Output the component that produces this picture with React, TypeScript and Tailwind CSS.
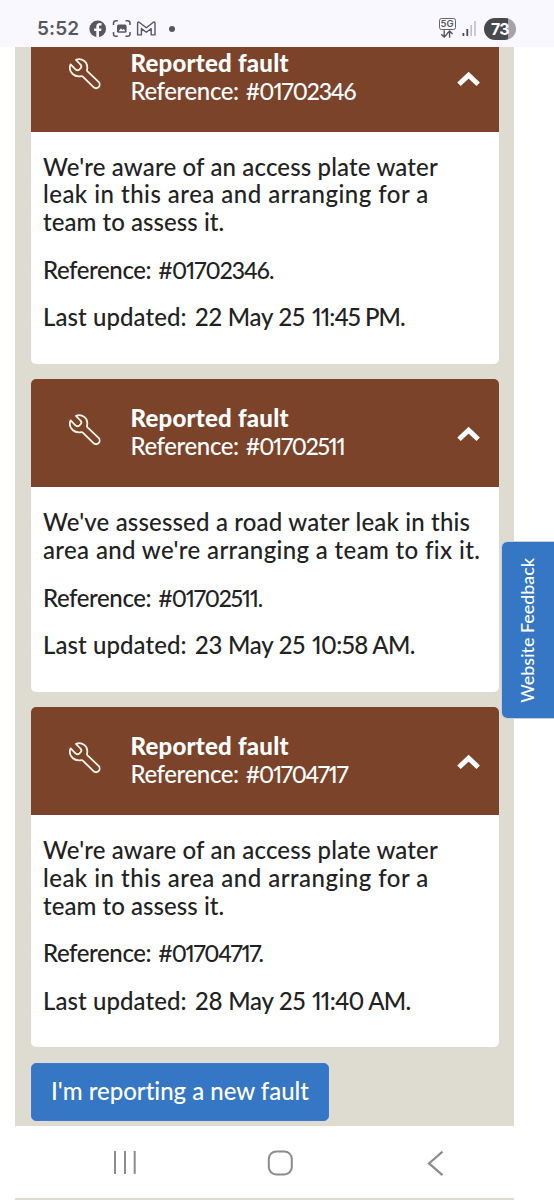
type Line = { text: string; spacing: string };
type Fault = {
  id: string;
  idSpacing: string;
  idDotSpacing: string;
  lines: Line[];
  date: string;
  time: string;
  timeSpacing: string;
};

const awareLines: Line[] = [
  { text: "We're aware of an access plate water", spacing: "tracking-[0.15px]" },
  { text: "leak in this area and arranging for a", spacing: "tracking-[0.48px]" },
  { text: "team to assess it.", spacing: "tracking-[0.06px]" },
];

const faults: Fault[] = [
  {
    id: "#01702346",
    idSpacing: "tracking-[-1.1px]",
    idDotSpacing: "tracking-[-1px]",
    lines: awareLines,
    date: "22 May 25",
    time: "11:45 PM.",
    timeSpacing: "tracking-[-0.95px]",
  },
  {
    id: "#01702511",
    idSpacing: "tracking-[-1.3px]",
    idDotSpacing: "tracking-[-1.2px]",
    lines: [
      { text: "We've assessed a road water leak in this", spacing: "tracking-[0.17px]" },
      { text: "area and we're arranging a team to fix it.", spacing: "tracking-[0.36px]" },
    ],
    date: "23 May 25",
    time: "10:58 AM.",
    timeSpacing: "tracking-[-0.6px]",
  },
  {
    id: "#01704717",
    idSpacing: "tracking-[-1.35px]",
    idDotSpacing: "tracking-[-1.3px]",
    lines: awareLines,
    date: "28 May 25",
    time: "11:40 AM.",
    timeSpacing: "tracking-[-0.75px]",
  },
];

function Wrench() {
  return (
    <svg width="32" height="32" viewBox="0 0 32 32" fill="none" stroke="#fff6e8" strokeWidth="1.8" strokeLinejoin="round" strokeLinecap="round">
      <path d="M7 1.9 C10.8 .3 15.2 1.5 17.2 5 C18.4 7.2 18.6 9.4 18 12 Q17.9 12.8 18.5 13.4 L29.6 23.9 C31 25.4 31 27.8 29.6 29.2 C28.2 30.6 25.9 30.6 24.5 29.2 L13.8 18.6 Q13.2 18 12.4 18.1 C9.3 18.7 6.2 18.3 3.7 16 C1 13.4 .1 9.6 1.6 6.4 L6.5 11.3 C7.6 12.4 9.4 12.4 10.5 11.4 L11.5 10.4 C12.5 9.3 12.5 7.6 11.4 6.5 Z" />
    </svg>
  );
}

function Chevron() {
  return (
    <svg width="24" height="18" viewBox="0 0 24 18" fill="none" stroke="#fff" strokeWidth="5">
      <path d="M2 15.2 L11.6 6.2 L21.2 15.2" />
    </svg>
  );
}

function FaultCard({ fault }: { fault: Fault }) {
  return (
    <section className="overflow-hidden rounded-[5px] bg-white">
      <header className="flex h-[108px] items-center bg-[#7b432a] pr-[18px] pl-[38px] text-white">
        <div className="w-[61.5px] pb-[7px]">
          <Wrench />
        </div>
        <div className="flex-1 pb-[2px]">
          <h2 className="text-[24px] leading-[28px] font-black tracking-[0.22px]">Reported fault</h2>
          <div className="flex items-baseline text-[24px] leading-[28px] font-medium">
            <span className="w-[115px] tracking-[-0.4px]">Reference:</span>
            <span className={`text-[23px] ${fault.idSpacing}`}>{fault.id}</span>
          </div>
        </div>
        <Chevron />
      </header>
      <div className="flex flex-col gap-[19.8px] px-3 pt-[21px] pb-[32.6px] text-[24px] leading-[27.8px] font-medium text-[#222]">
        <p>
          {fault.lines.map((line) => (
            <span key={line.text} className={`block ${line.spacing}`}>{line.text}</span>
          ))}
        </p>
        <p className="flex h-[27.8px] items-baseline">
          <span className="w-[115px] tracking-[-0.4px]">Reference:</span>
          <span className={`text-[23px] ${fault.idDotSpacing}`}>{fault.id}.</span>
        </p>
        <p className="flex">
          <span className="w-[152px] tracking-[0.08px]">Last updated:</span>
          <span className="w-[117px] tracking-[-0.2px]">{fault.date}</span>
          <span className={fault.timeSpacing}>{fault.time}</span>
        </p>
      </div>
    </section>
  );
}

function StatusBar() {
  return (
    <div className="relative z-10 flex h-[46.5px] items-start bg-[#f9f7ff] pr-[38px] pl-[37px]">
      <span className="mt-[16px] w-[51.5px] font-[Inter,sans-serif] text-[19px] leading-[26px] font-semibold tracking-[0.1px] text-[#59575e]">5:52</span>
      <svg className="mt-[19px]" width="92" height="20" viewBox="0 0 92 20" fill="none">
        <circle cx="8.7" cy="9.9" r="8.3" fill="#59575e" />
        <path d="M7.3 18.5V12H5.1V9.4H7.3V7.7C7.3 5.3 8.6 4 10.8 4L12.6 4.2V6.5H11.3C10.3 6.5 10 7.1 10 7.8V9.4H12.5L12.1 12H10V18.5Z" fill="#f9f7ff" />
        <g stroke="#59575e" strokeWidth="1.5">
          <path d="M24.5 6V4.2Q24.5 1.8 27 1.8H28.8M36.5 1.8H38.5Q41 1.8 41 4.2V6M41 13V15Q41 17.3 38.5 17.3H36.5M28.8 17.3H27Q24.5 17.3 24.5 15V13" />
        </g>
        <rect x="28" y="5.6" width="9.6" height="8.2" rx="1.6" fill="#59575e" />
        <path d="M29.6 12.2L32 9.3L33.5 10.9L34.7 9.8L36.3 12.2Z" fill="#f9f7ff" />
        <path d="M48.6 15.9V4.2Q48.6 2.6 50.2 3.2L57.3 8.7L64.4 3.2Q66 2.6 66 4.2V15.9H62.2V9.6L57.3 13.2L52.4 9.6V15.9Z" stroke="#59575e" strokeWidth="1.4" strokeLinejoin="round" />
        <circle cx="83" cy="9.9" r="3" fill="#59575e" />
      </svg>
      <div className="flex-1" />
      <div className="mt-[18px] flex w-[22px] flex-col items-center">
        <div className="flex h-[11.5px] w-[17px] items-center justify-center rounded-[2.5px] border border-[#66646b] font-[Inter,sans-serif] text-[9.5px] leading-none font-semibold text-[#59575e]">5G</div>
        <svg width="14" height="8" viewBox="0 0 14 8" fill="none" stroke="#59575e" strokeWidth="1.4">
          <path d="M4.2 .3V7M1.2 4.2L4.2 7.1L7 4.2M9.6 7.8V1M6.8 3.9L9.6 1L12.6 3.9" />
        </svg>
      </div>
      <svg className="mt-[20px] ml-[3px]" width="16" height="17" viewBox="0 0 16 17">
        <path d="M1.5 13h1.8v3h-1.8z M5.4 9h1.8v7h-1.8z" fill="#4c4a50" />
        <path d="M9.4 5h1.6v11h-1.6z M13.2 1h1.6v15h-1.6z" fill="#c1bfc6" />
      </svg>
      <div className="mt-[18px] ml-[7px] flex h-[22px] w-8 items-center justify-center rounded-full bg-linear-to-r from-[#49484b] from-74% to-[#a5a3a9] to-74% font-[Inter,sans-serif] text-[16px] leading-none font-bold tracking-[-0.7px] text-white">73</div>
    </div>
  );
}

export default function App() {
  return (
    <div className="relative flex h-[1200px] w-[554px] flex-col overflow-hidden bg-white font-[Lato,sans-serif] whitespace-nowrap proportional-nums">
      <StatusBar />
      <main className="ml-[15px] h-[1079.5px] w-[499px] overflow-hidden bg-[#dedbd1] pl-4">
        <div className="-mt-[23px] flex w-[467.5px] flex-col gap-[15.6px]">
          {faults.map((fault) => (
            <FaultCard key={fault.id} fault={fault} />
          ))}
          <button className="h-[58px] w-[298px] rounded-[5px] border border-[#3d78d6] bg-[#3577c4] pb-[2px] text-[24px] leading-[28px] font-medium text-white [font-variant-ligatures:none]">
            I'm reporting a new fault
          </button>
        </div>
      </main>
      <nav className="flex h-[72px] shrink-0 items-center pt-[2px]">
        <svg className="ml-[112px]" width="26" height="26" viewBox="0 0 26 26" stroke="#8c8c8c" strokeWidth="2">
          <path d="M3 1V24M13 1V24M22.7 1V24" />
        </svg>
        <svg className="ml-[129px]" width="26" height="26" viewBox="0 0 26 26" fill="none" stroke="#8c8c8c" strokeWidth="2">
          <rect x="1.8" y="1.4" width="23" height="23" rx="7.5" />
        </svg>
        <svg className="ml-[133px]" width="18" height="28" viewBox="0 0 18 28" fill="none" stroke="#8c8c8c" strokeWidth="2.2">
          <path d="M16.5 2.6L3 14.4L16.5 26.2" />
        </svg>
      </nav>
      <div className="ml-[15px] h-[2px] w-[499px] shrink-0 bg-[#dedbd1]" />
      <div className="absolute top-[542px] right-0 flex h-[176px] w-[52.5px] items-center justify-center rounded-l-[5px] bg-[#3577c4] outline outline-[#c5d0dc]">
        <span className="rotate-180 text-[17.9px] font-medium text-white [writing-mode:vertical-rl]">Website Feedback</span>
      </div>
    </div>
  );
}
